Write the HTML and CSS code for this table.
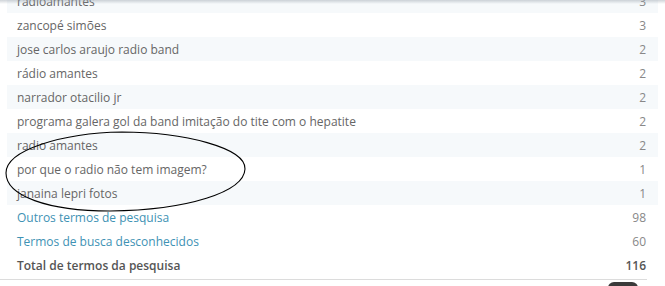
FILE: index.html
```html
<!DOCTYPE html>
<html lang="pt">
<head>
<meta charset="utf-8">
<title>Termos de pesquisa</title>
<link rel="stylesheet" href="styles.css">
</head>
<body>
<div class="page">
  <div class="top-shadow"></div>
  <div class="terms">
    <div class="row alt"><span class="label">radioamantes</span><span class="num">3</span></div>
    <div class="row"><span class="label">zancopé simões</span><span class="num">3</span></div>
    <div class="row alt"><span class="label">jose carlos araujo radio band</span><span class="num">2</span></div>
    <div class="row"><span class="label">rádio amantes</span><span class="num">2</span></div>
    <div class="row alt"><span class="label">narrador otacilio jr</span><span class="num">2</span></div>
    <div class="row"><span class="label">programa galera gol da band imitação do tite com o hepatite</span><span class="num">2</span></div>
    <div class="row alt"><span class="label">radio amantes</span><span class="num">2</span></div>
    <div class="row"><span class="label">por que o radio não tem imagem?</span><span class="num">1</span></div>
    <div class="row alt"><span class="label">janaina lepri fotos</span><span class="num">1</span></div>
    <div class="row"><a class="label link" href="#">Outros termos de pesquisa</a><span class="num">98</span></div>
    <div class="row"><a class="label link" href="#">Termos de busca desconhecidos</a><span class="num">60</span></div>
    <div class="row total"><span class="label">Total de termos da pesquisa</span><span class="num">116</span></div>
  </div>
  <div class="bottom-line"></div>
  <div class="footer-bar"><span class="knob"></span></div>
  <svg class="circle-mark" width="260" height="100" viewBox="0 0 260 100" aria-hidden="true">
    <path d="M122 8 C 184 8, 246 24, 245 45 C 244 68, 188 86, 110 87 C 48 87, 6 72, 6 49 C 6 26, 62 9, 122 8 Z" fill="none" stroke="#000" stroke-width="1.1"/>
  </svg>
</div>
</body>
</html>
```

FILE: styles.css
```css
html, body {
  margin: 0;
  padding: 0;
  background: #ffffff;
}

body {
  font-family: "Open Sans", "Liberation Sans", sans-serif;
  font-size: 12px;
  color: #666666;
  overflow: hidden;
}

.page {
  position: relative;
  width: 665px;
  height: 286px;
  overflow: hidden;
}

.top-shadow {
  position: absolute;
  left: 0;
  top: 0;
  width: 665px;
  height: 4px;
  background: linear-gradient(to bottom, rgba(150, 160, 170, 0.45), rgba(200, 210, 220, 0));
  z-index: 2;
}

.terms {
  margin: -11px 0 0 7px;
  width: 651px;
  display: flex;
  flex-direction: column;
}

.row {
  height: 24px;
  display: flex;
  align-items: center;
  justify-content: space-between;
  padding: 0 12px 0 10px;
  box-sizing: border-box;
}

.row.alt {
  background: #f6f9fb;
}

.label {
  color: #666666;
  white-space: nowrap;
}

.link {
  color: #3e92b4;
  text-decoration: none;
}

.num {
  color: #888888;
}

.total .label,
.total .num {
  font-weight: 600;
  color: #555555;
}

.bottom-line {
  margin-top: 2px;
  width: 647px;
  height: 1px;
  background: #dcdcdc;
}

.footer-bar {
  display: flex;
  padding-left: 608px;
  padding-top: 2px;
}

.knob {
  width: 30px;
  height: 6px;
  border-radius: 8px 8px 0 0;
  background: #3a3a3a;
}

.circle-mark {
  position: absolute;
  left: 0;
  top: 124px;
  z-index: 3;
}
```
